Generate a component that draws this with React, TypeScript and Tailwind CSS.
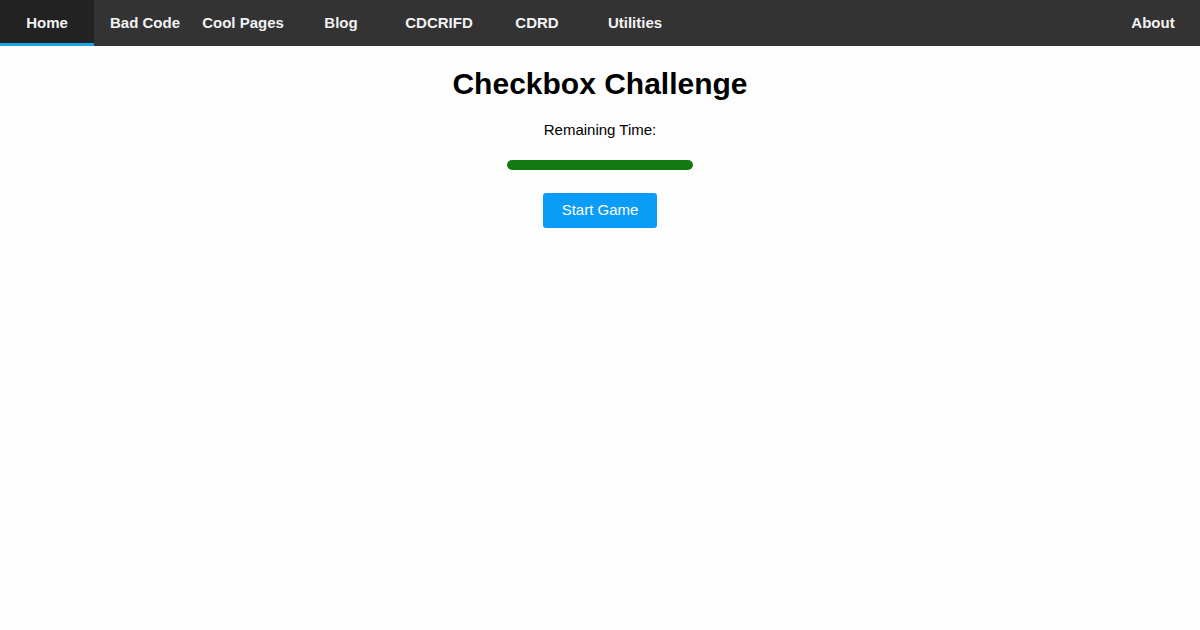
const links = ['Bad Code', 'Cool Pages', 'Blog', 'CDCRIFD', 'CDRD', 'Utilities'];

export default function App() {
  return (
    <div className="min-h-[630px] bg-[#fdfdfd] font-['Liberation_Sans',Arial,sans-serif] text-black">
      {/* NAV */}
      <nav className="h-[46px] bg-[#333333] flex text-[15px] font-bold text-[#f2f2f2]">
        <a className="w-[94px] mr-[4px] bg-[#222222] border-b-[3px] border-[#17a6e3] flex items-center justify-center pt-[3px]">Home</a>
        {links.map(l => (
          <a key={l} className="w-[94px] mr-[4px] flex items-center justify-center">{l}</a>
        ))}
        <span className="flex-1"></span>
        <a className="w-[94px] flex items-center justify-center">About</a>
      </nav>

      {/* CHALLENGE */}
      <div className="flex flex-col items-center">
        <h1 className="mt-[20px] text-[30px] leading-[36px] font-bold">Checkbox Challenge</h1>
        <p className="mt-[19px] text-[15px] leading-[18px]">Remaining Time:</p>
        <div className="mt-[21px] w-[186px] h-[10px] rounded-full bg-[#137a13]"></div>
        <button className="mt-[23px] w-[114px] h-[35px] rounded-[3px] bg-[#0a9cf7] text-white text-[15px]">Start Game</button>
      </div>
    </div>
  );
}
